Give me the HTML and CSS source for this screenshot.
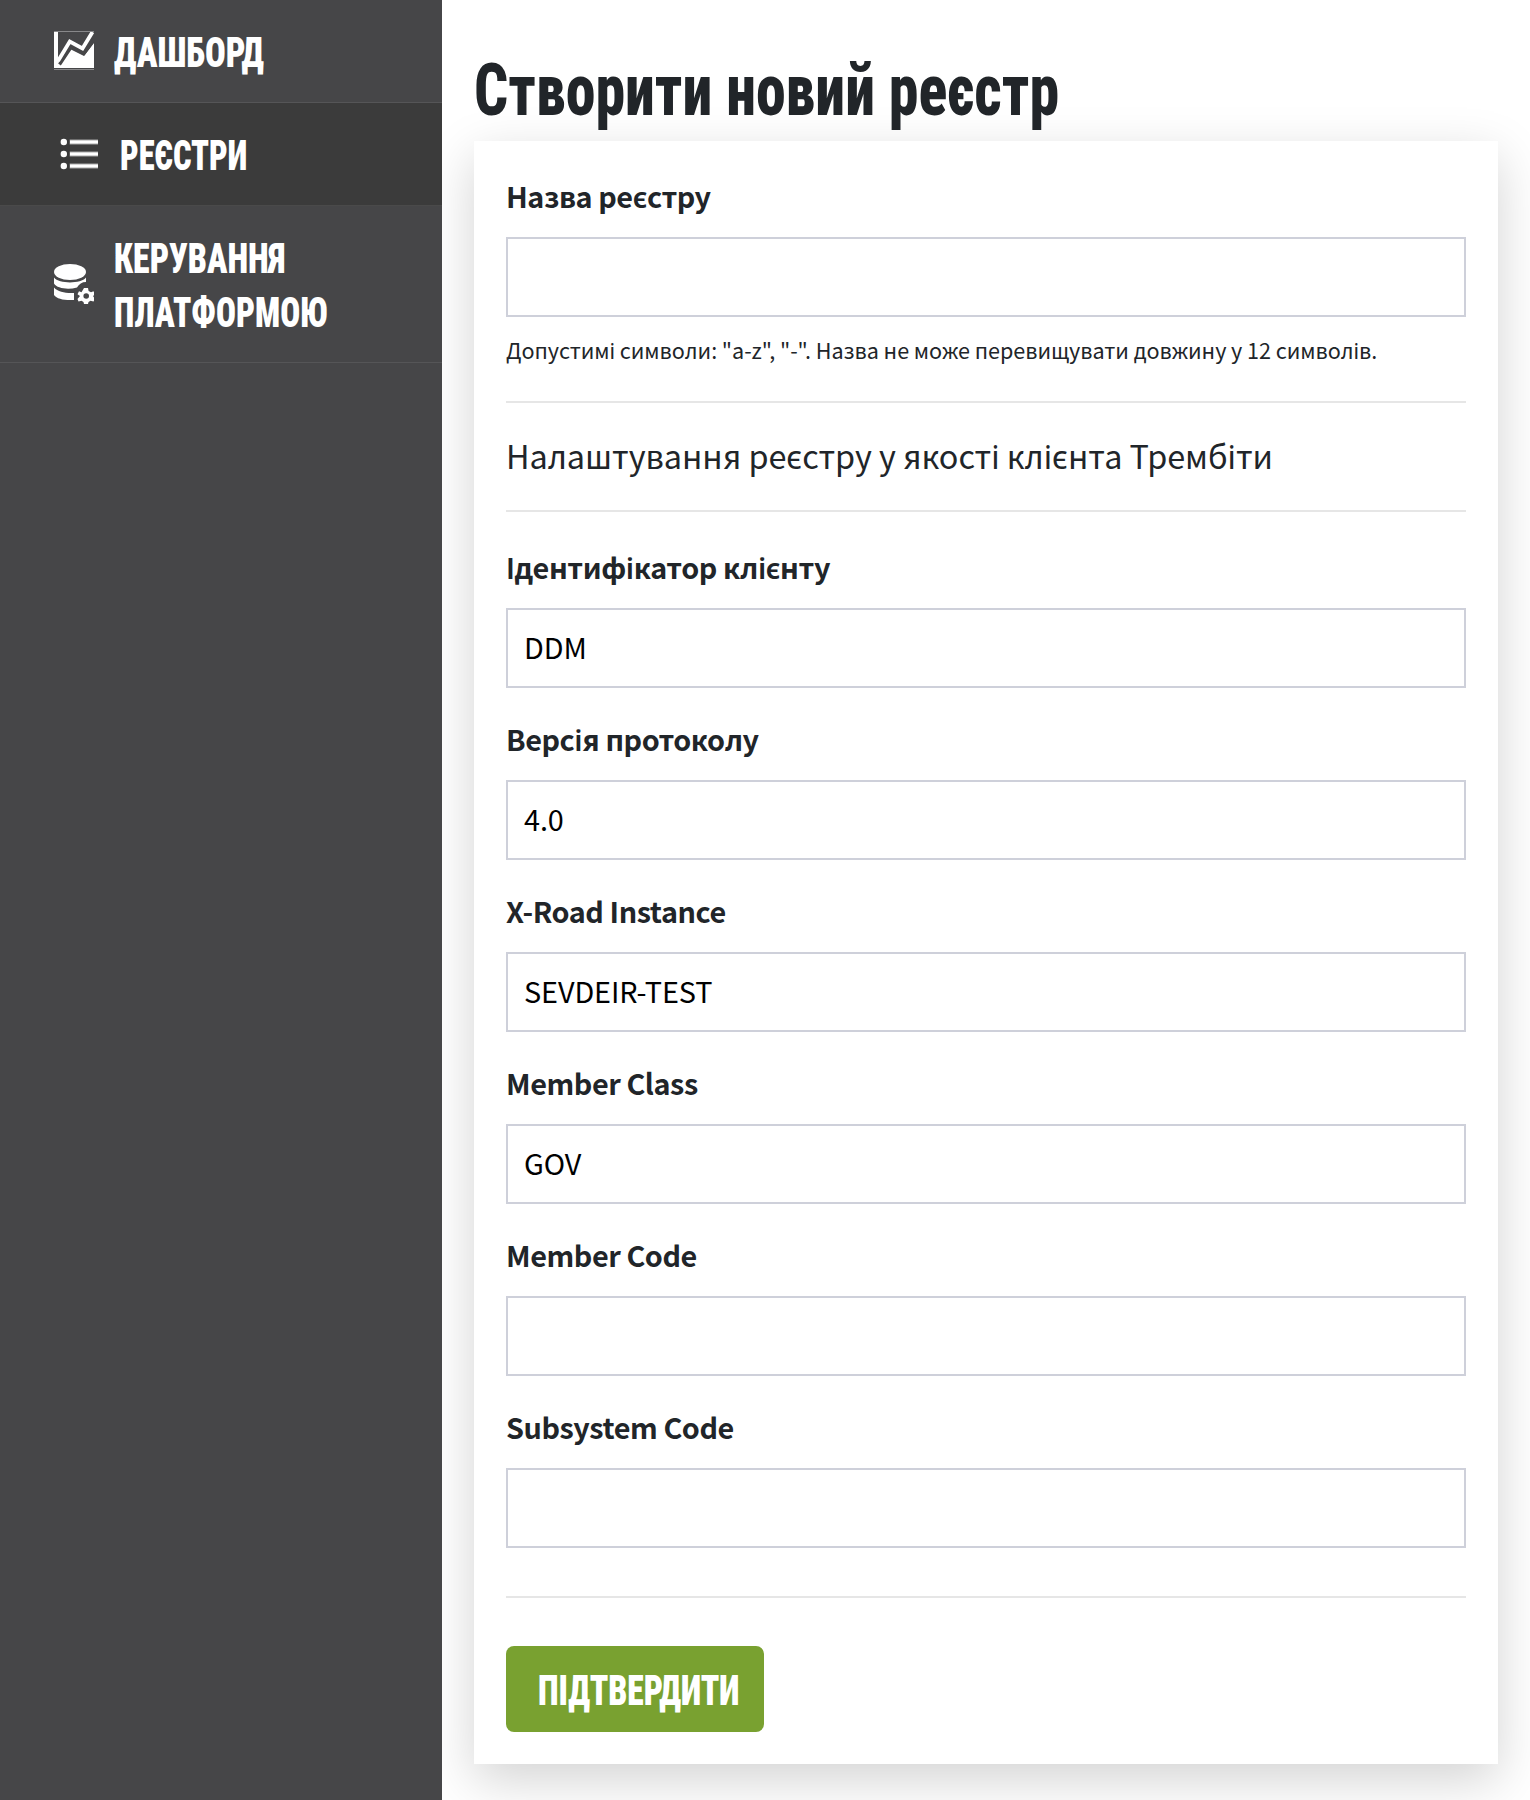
FILE: index.html
```html
<!DOCTYPE html>
<html lang="uk">
<head>
<meta charset="utf-8">
<title>Створити новий реєстр</title>
<link rel="stylesheet" href="styles.css">
</head>
<body>
<div class="layout">
  <nav class="sidebar">
    <a class="menu-item">
      <svg class="menu-icon" viewBox="0 0 40 40"><path d="M0 1h4v28l3 4 9-15 14 7 10-13v25H0z" fill="#fff"/><path d="M5.500 33.500 17.500 15.500 30 22.500 40.500 8" fill="none" stroke="#464648" stroke-width="3.200"/><path d="M4 30 15.800 10.500 28.500 17.500 38.500 1" fill="none" stroke="#fff" stroke-width="3.800"/><path d="M0 .5h40M0 38.500h40" stroke="#88888a"/></svg>
      <span class="menu-text"><span class="condensed dashboard">ДАШБОРД</span></span>
    </a>
    <a class="menu-item menu-item-active">
      <svg class="menu-icon" viewBox="0 0 40 40"><g fill="#fff"><circle cx="3.800" cy="8" r="3.200"/><circle cx="3.800" cy="20" r="3.200"/><circle cx="3.800" cy="32" r="3.200"/></g><path d="M9.700 5.500H38v5H9.700zM9.700 17.500H38v5H9.700zM9.700 29.500H38v5H9.700z" fill="#a6a6a6"/><path d="M10 6.500h28v3H10zM10 18.500h28v3H10zM10 30.500h28v3H10z" fill="#fff"/></svg>
      <span class="menu-text"><span class="condensed registries">РЕЄСТРИ</span></span>
    </a>
    <a class="menu-item">
      <svg class="menu-icon" viewBox="0 0 40 40"><g fill="#fff"><ellipse cx="16" cy="8" rx="16" ry="8"/><path d="M0 13.500c5 6.500 27 6.500 32 0V18c-4 0-7 2-9 5.500-9 2.500-20 1-23-4z"/><path d="M0 23.500c4 4.500 12 6 20 5.500v7C10 36.500 3 35 0 31z"/><path d="M30 24h4l.6 3 2.400 1.300 2.500-1 1.500 3-2 1.700 2 3-1.500 2.500-3-.8-2 1.300-.5 2h-4l-.5-2-2-1.300-3 .8L23.500 35l2.500-3-2.500-1.700 1.500-3 2.500 1z"/></g><circle cx="32.200" cy="32" r="2.800" fill="#464648"/></svg>
      <span class="menu-text"><span class="condensed management">КЕРУВАННЯ</span><br><span class="condensed platform">ПЛАТФОРМОЮ</span></span>
    </a>
  </nav>
  <main class="content">
    <h1 class="title"><span class="condensed">Створити новий реєстр</span></h1>
    <form class="card">
      <div class="field">
        <label class="label" for="name">Назва реєстру</label>
        <input class="input" id="name" type="text">
        <p class="hint">Допустимі символи: "a-z", "-". Назва не може перевищувати довжину у 12 символів.</p>
      </div>
      <h2 class="section">Налаштування реєстру у якості клієнта Трембіти</h2>
      <div class="fields">
        <div class="field"><label class="label" for="client">Ідентифікатор клієнту</label><input class="input" id="client" type="text" value="DDM"></div>
        <div class="field"><label class="label" for="version">Версія протоколу</label><input class="input" id="version" type="text" value="4.0"></div>
        <div class="field"><label class="label" for="instance">X-Road Instance</label><input class="input" id="instance" type="text" value="SEVDEIR-TEST"></div>
        <div class="field"><label class="label" for="class">Member Class</label><input class="input" id="class" type="text" value="GOV"></div>
        <div class="field"><label class="label" for="code">Member Code</label><input class="input" id="code" type="text"></div>
        <div class="field"><label class="label" for="subsystem">Subsystem Code</label><input class="input" id="subsystem" type="text"></div>
      </div>
      <div class="actions"><button class="submit" type="button"><span class="condensed confirm">ПІДТВЕРДИТИ</span></button></div>
    </form>
  </main>
</div>
</body>
</html>
```
FILE: styles.css
```css
* { box-sizing: border-box; }
body {
  margin: 0;
  background: #fff;
  color: #212529;
  font-family: "Noto Sans CJK SC", "Noto Sans", sans-serif;
  font-size: 28.8px;
}
.layout { display: flex; height: 1800px; overflow: hidden; }
.sidebar { flex: none; width: 442px; background: #464648; position: relative; z-index: 1; }
.menu-item {
  display: flex;
  align-items: center;
  gap: 20px;
  padding: 24px 24px 24px 54px;
  border-bottom: 1px solid #555557;
  color: #fff;
}
.menu-item-active { padding-left: 60px; background: #3b3b3b; border-bottom-color: #4a4a4a; }
.menu-icon { flex: none; width: 40px; height: 40px; }
.menu-text {
  margin: 2px 0 -2px;
  font: 900 42px/54px Roboto, sans-serif;
  font-stretch: 75%;
  white-space: nowrap;
}
.condensed { display: inline-block; transform: scaleX(0.829); transform-origin: left; white-space: nowrap; }
.dashboard { transform: scaleX(0.819); }
.registries { transform: scaleX(0.773); }
.management { transform: scaleX(0.805); }
.platform { transform: scaleX(0.789); }
.confirm { transform: scaleX(0.8); }
.content { flex: 1; padding: 40px 32px 36px; }
.title {
  margin: 0;
  font: 800 72px/101px Roboto, sans-serif;
  font-stretch: 75%;
}
.title .condensed { transform: scaleX(0.833); }
.card {
  padding: 32px;
  background: #fff;
  box-shadow: 0 16px 48px rgba(0, 0, 0, 0.175);
}
.label { display: block; margin-bottom: 19px; line-height: 45px; font-weight: 600; letter-spacing: -0.43px; }
.input {
  display: block;
  width: 100%;
  height: 80px;
  padding: 0 16px 4px;
  border: 2px solid #ced0da;
  border-radius: 0;
  background: #fff;
  color: #000;
  font: inherit;
  letter-spacing: -0.1px;
}
.hint { margin: 15px 0 34px; font-size: 21.6px; line-height: 35px; letter-spacing: -0.05px; }
.section {
  margin: 0 0 32px;
  padding: 25px 0 28px;
  border-top: 2px solid #e6e6e6;
  border-bottom: 2px solid #e6e6e6;
  font-size: 32.4px;
  font-weight: 400;
  line-height: 54px;
  letter-spacing: -0.05px;
}
.fields { display: grid; gap: 28px; }
.actions { margin-top: 48px; padding-top: 48px; border-top: 2px solid #e6e6e6; }
.submit {
  display: block;
  width: 258px;
  height: 86px;
  padding: 4px 0 0 32px;
  border: 0;
  border-radius: 8px;
  background: #79a130;
  color: #fff;
  font: 900 42px/54px Roboto, sans-serif;
  font-stretch: 75%;
  text-align: left;
}
```
